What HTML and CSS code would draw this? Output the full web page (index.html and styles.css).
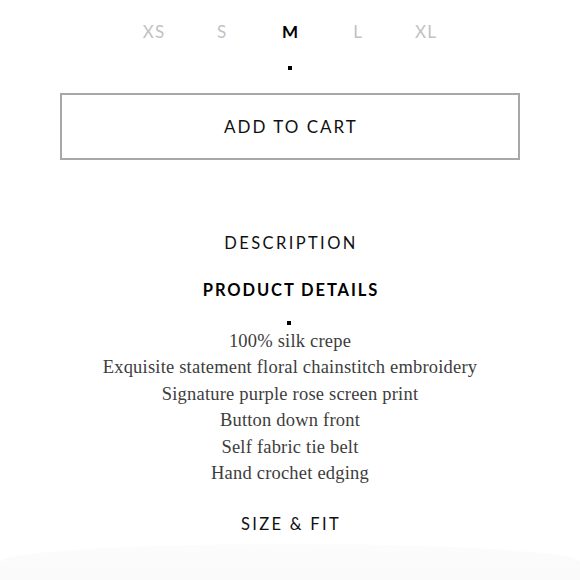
FILE: index.html
```html
<!DOCTYPE html>
<html lang="en">
<head>
<meta charset="utf-8">
<title>Product</title>
<link rel="stylesheet" href="styles.css">
</head>
<body>
<main class="page">
  <div class="sizes">
    <div class="size"><span class="size-label">XS</span></div>
    <div class="size"><span class="size-label">S</span></div>
    <div class="size active"><span class="size-label">M</span><span class="dot"></span></div>
    <div class="size"><span class="size-label">L</span></div>
    <div class="size"><span class="size-label">XL</span></div>
  </div>
  <button class="cart">ADD TO CART</button>
  <h2 class="tab">DESCRIPTION</h2>
  <h2 class="tab tab-active">PRODUCT DETAILS</h2>
  <span class="dot dot-center"></span>
  <ul class="details">
    <li>100% silk crepe</li>
    <li>Exquisite statement floral chainstitch embroidery</li>
    <li>Signature purple rose screen print</li>
    <li>Button down front</li>
    <li>Self fabric tie belt</li>
    <li>Hand crochet edging</li>
  </ul>
  <h2 class="tab tab-last">SIZE &amp; FIT</h2>
  <div class="sheet"></div>
</main>
</body>
</html>
```
FILE: styles.css
```css
* { box-sizing: border-box; }
html, body { margin: 0; padding: 0; background: #fff; }
body { font-family: Lato, "Liberation Sans", sans-serif; color: #111; overflow: hidden; height: 580px; }
.page { display: flex; flex-direction: column; align-items: center; width: 580px; overflow: hidden; }
.sizes { display: flex; justify-content: center; padding-top: 20px; margin-left: 0; }
.size { width: 68px; display: flex; flex-direction: column; align-items: center; }
.size-label { font-size: 17px; line-height: 24px; color: #c2c2c2; letter-spacing: 1px; }
.size.active .size-label { color: #000; font-weight: 700; letter-spacing: 0; }
.dot { display: block; width: 4px; height: 4px; background: #000; }
.size .dot { margin-top: 22px; }
.sizes + .cart { margin-top: 23px; }
.size.active { height: 50px; }
.cart {
  width: 460px; height: 67px; border: 2px solid #a8a8a8; background: #fff;
  font-family: Lato, "Liberation Sans", sans-serif; font-size: 17px; letter-spacing: 2px;
  color: #111; padding: 0 0 0 2px; margin: 0;
}
.tab { margin: 0; font-weight: 400; font-size: 16.5px; line-height: 24px; letter-spacing: 2.4px; color: #111; padding-left: 2px; }
.cart + .tab { margin-top: 71px; }
.tab-active { margin-top: 23px; font-weight: 700; letter-spacing: 1.9px; color: #000; }
.dot-center { margin-top: 19px; margin-left: -2px; }
.details { list-style: none; margin: 3px 0 0; padding: 0; text-align: center;
  font-family: "Liberation Serif", serif; font-size: 18.5px; line-height: 26.4px; color: #3d3d3d; letter-spacing: 0.2px; }
.tab-last { margin-top: 26px; font-weight: 400; letter-spacing: 2.3px; }
.sheet { width: 580px; height: 50px; margin-top: 8px; border-radius: 50% 50% 0 0 / 18px 18px 0 0; background: linear-gradient(#fcfcfc, #f9f9f9); flex: none; }
```
